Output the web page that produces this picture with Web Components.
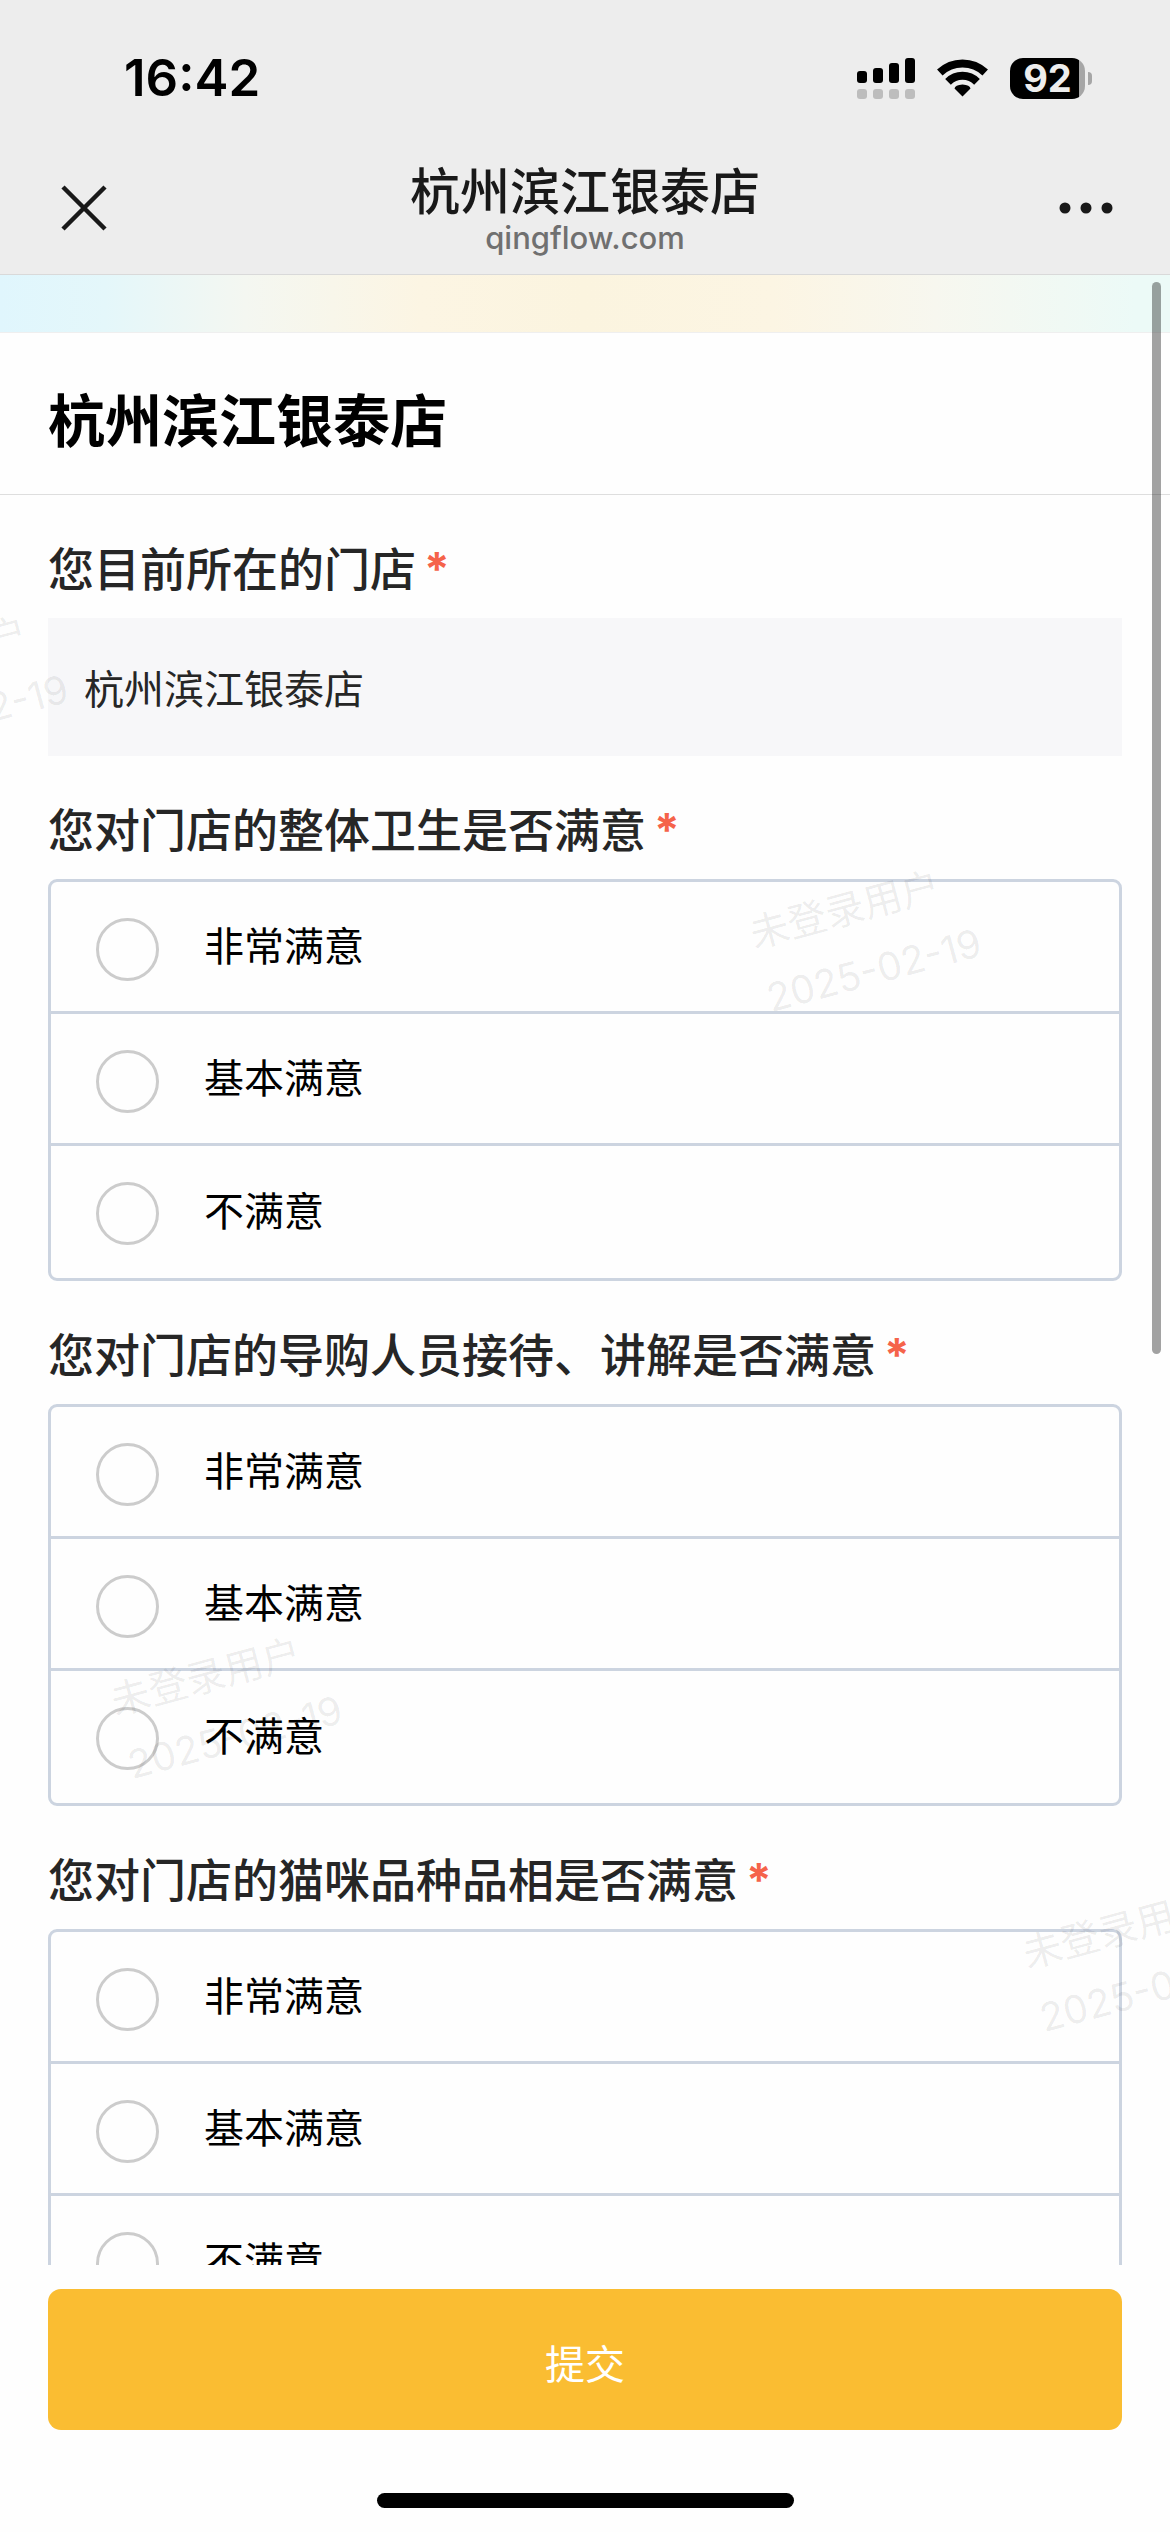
<!DOCTYPE html>
<html lang="zh-CN">
<head>
<meta charset="utf-8">
<meta name="viewport" content="width=device-width, initial-scale=1">
<title>杭州滨江银泰店</title>
<style>
  html, body { margin: 0; height: 100%; }
  body { font-family: Inter, "Noto Sans CJK SC", sans-serif; color: #000; background: #fefefe; }
</style>
</head>
<body>
<survey-app>
  <phone-status slot="header" time="16:42" battery="92"></phone-status>
  <browser-bar slot="header" host="qingflow.com">杭州滨江银泰店</browser-bar>
  <survey-title>杭州滨江银泰店</survey-title>
  <survey-form>
    <store-field value="杭州滨江银泰店">您目前所在的门店</store-field>
    <rating-question name="clean">您对门店的整体卫生是否满意</rating-question>
    <rating-question name="staff">您对门店的导购人员接待、讲解是否满意</rating-question>
    <rating-question name="cats">您对门店的猫咪品种品相是否满意</rating-question>
  </survey-form>
  <page-watermark slot="overlay" user="未登录用户" date="2025-02-19"></page-watermark>
  <submit-bar slot="footer">提交</submit-bar>
</survey-app>

<script>
const define = (name, html) => customElements.define(name, class extends HTMLElement {
  constructor() {
    super();
    this.attachShadow({ mode: 'open' }).innerHTML = typeof html === 'function' ? html(this) : html;
  }
});

const reset = ':host,*{box-sizing:border-box} button{font:inherit;border:0;background:none;padding:0;margin:0;cursor:pointer}';

define('survey-app', `
<style>${reset}
  :host{display:flex;flex-direction:column;height:100vh;overflow:hidden}
  header{flex:none;background:#ededed;border-bottom:1px solid #d9d9d9}
  main{flex:1;min-height:0;overflow:hidden;position:relative}
  .banner{height:58px;border-bottom:1px solid #efefef;
    background:linear-gradient(90deg,#e0f6fd 0%,#e4f7fa 9%,#f4f7f1 21%,#fcf5e3 36%,#fbf4df 50%,#fcf5e3 66%,#f7f7ef 80%,#ecfaf7 97%)}
  .scrollbar{position:absolute;top:7px;right:9px;width:9px;height:1072px;border-radius:5px;background:rgba(0,0,0,.36)}
</style>
<header><slot name="header"></slot></header>
<main>
  <div class="banner"></div>
  <slot></slot>
  <slot name="overlay"></slot>
  <div class="scrollbar"></div>
</main>
<slot name="footer"></slot>`);

define('phone-status', el => `
<style>${reset}
  :host{display:flex;align-items:center;justify-content:space-between;height:141px;padding:15px 78px 0 124px}
  time{font-size:51px;line-height:60px;font-weight:600}
  .icons{display:flex;align-items:center;gap:22px}
  svg{display:block}
  .battery{position:relative;display:grid;place-items:center;width:75px;height:41px;border-radius:13px;
    background:linear-gradient(90deg,#000 69px,#a6a6a6 69px);color:#ededed;font-size:38px;line-height:41px;font-weight:700;margin-right:7px}
  .battery::after{content:"";position:absolute;left:78px;top:14px;width:4px;height:13px;border-radius:0 5px 5px 0;background:#a6a6a6}
</style>
<time>${el.getAttribute('time')}</time>
<div class="icons">
  <svg width="58" height="41" viewBox="0 0 58 41" role="img" aria-label="信号">
    <rect x="0" y="13" width="10" height="12" rx="3"/><rect x="16" y="10" width="10" height="15" rx="3"/>
    <rect x="32" y="5" width="10" height="20" rx="3"/><rect x="48" y="0" width="10" height="25" rx="3"/>
    <g fill="#bdbdbd"><rect x="0" y="31" width="10" height="10" rx="3"/><rect x="16" y="31" width="10" height="10" rx="3"/>
    <rect x="32" y="31" width="10" height="10" rx="3"/><rect x="48" y="31" width="10" height="10" rx="3"/></g>
  </svg>
  <svg width="51" height="38" viewBox="0 0 51 38" role="img" aria-label="无线网络">
    <g fill="none" stroke="#000" stroke-width="8">
      <path d="M2.8 13.5A33 33 0 0 1 48.2 13.5"/><path d="M11 22.8A20.5 20.5 0 0 1 40 22.8"/>
    </g>
    <path d="M25.5 37.5L17.5 29.5Q18 26 25.5 25.5Q33 26 33.5 29.5Z"/>
  </svg>
  <div class="battery">${el.getAttribute('battery')}</div>
</div>`);

define('browser-bar', el => `
<style>${reset}
  :host{display:flex;align-items:center;justify-content:space-between;height:133px;padding:0 54px}
  button{display:grid;place-items:center;width:60px;height:60px}
  .heading{text-align:center}
  .name{font-size:50px;line-height:60px;font-weight:500;color:#191919}
  .host{font-size:31px;line-height:32px;font-weight:500;color:#707070}
</style>
<button aria-label="关闭"><svg width="46" height="46" viewBox="0 0 46 46" stroke="#191919" stroke-width="4.5"><path d="M2 2L44 44M44 2L2 44"/></svg></button>
<div class="heading"><div class="name"><slot></slot></div><div class="host">${el.getAttribute('host')}</div></div>
<button aria-label="更多"><svg width="54" height="12" viewBox="0 0 54 12" fill="#191919"><circle cx="6" cy="6" r="5.5"/><circle cx="27" cy="6" r="5.5"/><circle cx="48" cy="6" r="5.5"/></svg></button>`);

define('survey-title', `
<style>
  :host{display:block;padding:46px 48px 29px;border-bottom:1px solid #dedede}
  h1{margin:0;font-size:57px;line-height:86px;font-weight:700}
</style>
<h1><slot></slot></h1>`);

define('survey-form', `
<style>:host{display:flex;flex-direction:column;gap:41px;padding:41px 48px}</style>
<slot></slot>`);

const labelStyle = `
  .label{display:block;padding:0;margin:0 0 16px;font-size:46px;line-height:66px;font-weight:500;color:#262626}
  .req{color:#f5634a;margin-left:8px;font-weight:700;line-height:1}`;

define('store-field', el => `
<style>${reset}${labelStyle}
  :host{display:block}
  input{display:block;width:100%;height:138px;padding:0 36px;border:0;border-radius:0;background:#f7f7f9;
    font:400 40px/60px Inter,"Noto Sans CJK SC",sans-serif;color:#262626;outline:0}
</style>
<label class="label" for="store"><slot></slot><span class="req">*</span></label>
<input id="store" type="text" readonly value="${el.getAttribute('value')}">`);

define('rating-question', el => `
<style>${reset}${labelStyle}
  :host{display:block}
  fieldset{border:0;margin:0;padding:0;min-width:0}
  .options{border:3px solid #ccd4e0;border-radius:9px}
  .option{display:flex;align-items:center;gap:45px;height:132px;padding-left:45px;border-bottom:3px solid #ccd4e0;
    font-size:40px;line-height:60px;color:#000}
  .option:last-child{border-bottom:0}
  input{appearance:none;align-self:flex-start;flex:none;width:63px;height:63px;margin:36px 0 0;border:3px solid #ccc;border-radius:50%}
  input:checked{border:18px solid #fabd32}
</style>
<fieldset>
  <legend class="label"><slot></slot><span class="req">*</span></legend>
  <div class="options">${['非常满意', '基本满意', '不满意'].map(t =>
    `<label class="option"><input type="radio" name="${el.getAttribute('name')}" value="${t}"><span>${t}</span></label>`).join('')}</div>
</fieldset>`);

// Repeating diagonal stamp laid over the scrolling content
define('page-watermark', el => {
  const stamps = [[-171, 374], [742, 628], [103, 1395], [1015, 1648]];
  return `
<style>
  :host{position:absolute;inset:0;overflow:hidden;pointer-events:none;color:rgba(0,0,0,.08)}
  div{position:absolute;white-space:nowrap;font-size:39px;line-height:66px;font-weight:400;transform:rotate(-15deg);transform-origin:0 0}
  span{display:block}
</style>${stamps.map(([x, y]) =>
    `<div style="left:${x}px;top:${y}px"><span>${el.getAttribute('user')}</span><span>${el.getAttribute('date')}</span></div>`).join('')}`;
});

define('submit-bar', `
<style>${reset}
  :host{flex:none;display:flex;flex-direction:column;align-items:center;gap:63px;padding:24px 48px;background:#fefefe}
  button{width:100%;height:141px;padding-top:10px;border-radius:13px;background:#fabd32;color:#fff;font-size:40px;line-height:60px}
  .home{width:417px;height:15px;border-radius:8px;background:#000}
</style>
<button type="submit"><slot></slot></button>
<div class="home"></div>`);
</script>
</body>
</html>
